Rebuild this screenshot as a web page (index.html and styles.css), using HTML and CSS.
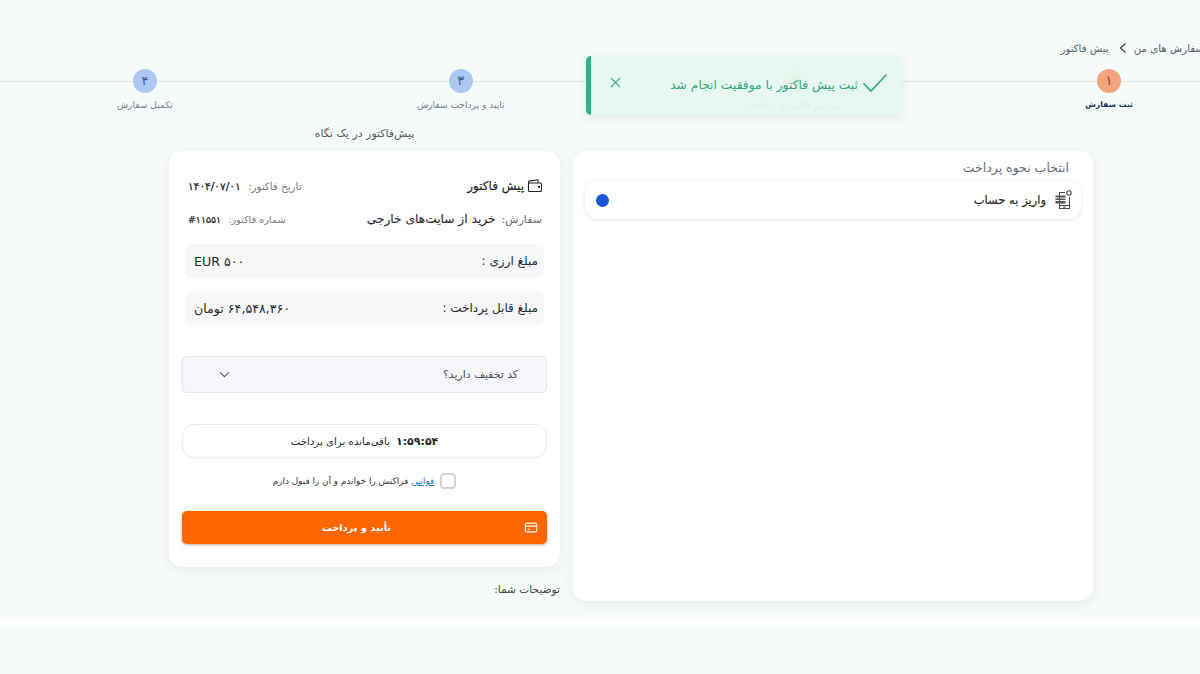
FILE: index.html
```html
<!DOCTYPE html>
<html lang="fa" dir="rtl">
<head>
    <meta charset="UTF-8">
    <meta name="viewport" content="width=device-width, initial-scale=1.0">
    <title>پیش فاکتور</title>
    <link rel="stylesheet" href="styles.css">
</head>
<body>
    <div class="page">
        <nav class="breadcrumb">
            <span>سفارش های من</span>
            <svg class="crumb-icon" viewBox="0 0 10 12"><path d="M7.500 1.500 2.500 6l5 4.500"/></svg>
            <span>پیش فاکتور</span>
        </nav>

        <!-- مراحل سفارش -->
        <ol class="steps">
            <li class="step step-done">
                <span class="step-num">۱</span>
                <span class="step-label">ثبت سفارش</span>
            </li>
            <li class="step step-current">
                <span class="step-num">۲</span>
                <span class="step-label">بررسی فاکتور و پرداخت</span>
            </li>
            <li class="step">
                <span class="step-num">۳</span>
                <span class="step-label">تایید و پرداخت سفارش</span>
            </li>
            <li class="step">
                <span class="step-num">۴</span>
                <span class="step-label">تکمیل سفارش</span>
            </li>
        </ol>

        <main class="content">
            <section class="card pay-card">
                <h2 class="pay-title">انتخاب نحوه پرداخت</h2>
                <label class="pay-option">
                    <svg class="pay-icon" viewBox="0 0 18 20">
                        <path d="M11 2.500H5.500v16h10V7"/>
                        <path d="M5.500 15.500h10M9 17h3"/>
                        <circle cx="15" cy="3" r="2.200"/>
                        <path class="pay-icon-fill" d="M1.500 5.500h10v2h-10zM1.500 8.500h10v1.500h-10zM1.500 11h10v2.500h-10z"/>
                    </svg>
                    <span class="pay-name">واریز به حساب</span>
                    <span class="radio-dot"></span>
                </label>
            </section>

            <div class="invoice-col">
                <p class="invoice-caption">پیش‌فاکتور در یک نگاه</p>
                <section class="card invoice">
                    <div class="invoice-row row-head">
                        <h1 class="invoice-title">
                            <svg class="wallet-icon" viewBox="0 0 16 14">
                                <path d="M1.500 4v7.500a1 1 0 0 0 1 1h11a1 1 0 0 0 1-1V5a1 1 0 0 0-1-1h-11a1 1 0 0 1-.4-1.900L11 .8V4"/>
                                <circle cx="12" cy="8" r=".6"/>
                            </svg>
                            پیش فاکتور
                        </h1>
                        <span class="meta">تاریخ فاکتور: <b>۱۴۰۴/۰۷/۰۱</b></span>
                    </div>
                    <div class="invoice-row row-order">
                        <span class="order"><span class="order-key">سفارش:</span> خرید از سایت‌های خارجی</span>
                        <span class="meta meta-num">شماره فاکتور: <b dir="ltr">#۱۱۵۵۱</b></span>
                    </div>

                    <div class="amount">
                        <span>مبلغ ارزی :</span>
                        <span class="amount-value">EUR ۵۰۰</span>
                    </div>
                    <div class="amount">
                        <span>مبلغ قابل پرداخت :</span>
                        <span class="amount-value">۶۴,۵۴۸,۳۶۰ تومان</span>
                    </div>

                    <div class="discount">
                        <span>کد تخفیف دارید؟</span>
                        <svg class="chevron" viewBox="0 0 12 8"><path d="M1 1.500 6 6.500l5-5"/></svg>
                    </div>

                    <div class="timer"><b>۱:۵۹:۵۴</b> باقی‌مانده برای پرداخت</div>

                    <label class="terms">
                        <span class="checkbox"></span>
                        <span><a href="#">قوانین</a> فراکنش را خواندم و آن را قبول دارم</span>
                    </label>

                    <button class="pay-btn" type="button">
                        <svg class="btn-icon" viewBox="0 0 16 14">
                            <rect x="1.500" y="2" width="13" height="10" rx="2"/>
                            <path d="M1.500 5.500h13M4 9h3"/>
                        </svg>
                        <span>تأیید و پرداخت</span>
                    </button>
                </section>
                <p class="notes">توضیحات شما:</p>
            </div>
        </main>

        <div class="strip"></div>
    </div>

    <!-- پیام موفقیت -->
    <div class="toast">
        <svg class="toast-check" viewBox="0 0 26 20"><path d="M1.500 10.500 9 18 24.500 1.500"/></svg>
        <span class="toast-text">ثبت پیش فاکتور با موفقیت انجام شد</span>
        <svg class="toast-close" viewBox="0 0 12 12"><path d="M1 1l10 10M11 1 1 11"/></svg>
    </div>
</body>
</html>
```

FILE: styles.css
```css
html, body {
    margin: 0;
    height: 100%;
    overflow: hidden;
}

body {
    background: #f5fbf8;
    font-family: "DejaVu Sans", sans-serif;
    color: #2b2f36;
}

.page {
    width: 1200px;
    height: 674px;
    padding-top: 40px;
    box-sizing: border-box;
    overflow: hidden;
}

/* مسیر صفحه */
.breadcrumb {
    display: flex;
    align-items: center;
    gap: 6px;
    height: 16px;
    margin-right: -4px;
    font-size: 10.200px;
    color: #555b63;
    white-space: nowrap;
}

.crumb-icon {
    width: 10px;
    height: 12px;
    margin-left: 3px;
    fill: none;
    stroke: #444;
    stroke-width: 1.300;
}

/* مراحل */
.steps {
    display: flex;
    justify-content: space-between;
    list-style: none;
    margin: 13px 0 0;
    padding: 0 67px 0 117px;
    background: linear-gradient(#dfe6e6, #dfe6e6) no-repeat 0 12px / 100% 1px;
}

.step {
    display: flex;
    flex-direction: column;
    align-items: center;
    gap: 5px;
}

.step-num {
    width: 24px;
    height: 24px;
    border-radius: 50%;
    background: #abc8f5;
    color: #3b5a8c;
    font-size: 13px;
    line-height: 24px;
    text-align: center;
}

.step-label {
    font-size: 9.100px;
    line-height: 14px;
    color: #727f93;
    white-space: nowrap;
}

.step-done .step-num {
    background: #f4a47c;
    color: #7c4526;
}

.step-done .step-label {
    font-size: 7.700px;
    color: #17305f;
    font-weight: bold;
}

.step-current .step-num {
    background: #f6dca8;
    color: #9a8350;
}

/* ستون ها */
.content {
    display: flex;
    gap: 13px;
    margin-top: 14px;
    padding: 0 107px 0 169px;
}

.card {
    background: #fff;
    border-radius: 14px;
    box-shadow: 0 3px 12px rgba(60, 80, 70, 0.08);
}

.pay-card {
    width: 520px;
    height: 450px;
    margin-top: 25px;
    padding: 8px 12px 0;
    box-sizing: border-box;
}

.pay-title {
    margin: 0 12px 4px 0;
    font-size: 12.500px;
    font-weight: normal;
    line-height: 18px;
    color: #666d78;
}

.pay-option {
    display: flex;
    align-items: center;
    height: 38px;
    padding: 0 9px 0 0;
    border-radius: 12px;
    background: #fff;
    box-shadow: 0 1px 4px rgba(40, 50, 60, 0.13);
}

.pay-icon {
    width: 18px;
    height: 20px;
    fill: none;
    stroke: #4a4a4a;
    stroke-width: 1.100;
}

.pay-icon .pay-icon-fill {
    fill: #555;
    stroke: none;
}

.pay-name {
    margin-right: 8px;
    font-size: 11.500px;
    -webkit-text-stroke: 0.15px #1d1f24;
    color: #1d1f24;
}

.radio-dot {
    width: 13px;
    height: 13px;
    margin-right: auto;
    margin-left: 11px;
    border-radius: 50%;
    background: #1a56db;
}

.invoice-col {
    width: 391px;
}

.invoice-caption {
    margin: 0;
    height: 25px;
    font-size: 10.900px;
    line-height: 16px;
    text-align: center;
    color: #555a62;
}

.invoice {
    height: 416px;
    padding: 25px 13px 0;
    box-sizing: border-box;
}

.invoice-row {
    display: flex;
    align-items: center;
    justify-content: space-between;
    height: 20px;
    padding: 0 5px 0 6px;
}

.row-order {
    margin-top: 13px;
}

.invoice-title {
    display: flex;
    align-items: center;
    gap: 3px;
    margin: 0 -1px 0 0;
    font-size: 12px;
    font-weight: normal;
    -webkit-text-stroke: 0.15px #1d1f24;
    color: #1d1f24;
}

.wallet-icon {
    width: 16px;
    height: 14px;
    fill: none;
    stroke: #222;
    stroke-width: 1.100;
}

.meta {
    font-size: 10.300px;
    color: #74797f;
}

.meta b {
    margin-right: 4px;
    font-size: 10.600px;
    font-weight: normal;
    -webkit-text-stroke: 0.25px #222;
    color: #222;
}

.meta-num {
    font-size: 9.700px;
}

.meta-num b {
    font-size: 9.400px;
}

.order {
    font-size: 12.200px;
    -webkit-text-stroke: 0.1px #26282d;
    color: #26282d;
}

.order-key {
    margin-left: 2px;
    font-size: 11px;
    -webkit-text-stroke: 0;
    color: #666b72;
}

.amount {
    display: flex;
    align-items: center;
    justify-content: space-between;
    height: 34px;
    margin: 13px 3px 0;
    padding: 0 6px 0 9px;
    border-radius: 6px;
    background: #f6f7f9;
    font-size: 12px;
    color: #26282d;
}

.amount-value {
    font-size: 12.600px;
}

.row-order + .amount {
    margin-top: 15px;
}

.discount {
    display: flex;
    align-items: center;
    justify-content: space-between;
    height: 37px;
    margin-top: 31px;
    padding: 0 28px 0 36px;
    box-sizing: border-box;
    border: 1px solid #e2e6ea;
    border-radius: 5px;
    background: #f5f7fa;
    font-size: 10.800px;
    color: #4a4f57;
}

.chevron {
    width: 11px;
    height: 7px;
    fill: none;
    stroke: #555;
    stroke-width: 1.200;
}

.timer {
    display: flex;
    align-items: center;
    justify-content: center;
    gap: 6px;
    height: 34px;
    margin-top: 31px;
    box-sizing: border-box;
    border: 1px solid #e7ebee;
    border-radius: 12px;
    font-size: 10.200px;
    color: #26282d;
}

.timer b {
    font-size: 11px;
}

.terms {
    display: flex;
    align-items: center;
    justify-content: center;
    gap: 6px;
    height: 18px;
    margin-top: 14px;
    font-size: 8.900px;
    color: #34373d;
}

.terms a {
    color: #2478b8;
}

.checkbox {
    width: 12px;
    height: 12px;
    border: 2px solid #d2d5d8;
    border-radius: 4px;
}

.pay-btn {
    display: flex;
    align-items: center;
    width: 100%;
    height: 33px;
    margin-top: 21px;
    padding: 0 9px 0 0;
    border: none;
    border-radius: 5px;
    background: #ff6600;
    box-shadow: 0 1px 3px rgba(120, 60, 20, 0.4);
    color: #fff;
    font-family: inherit;
    font-size: 9.800px;
    font-weight: bold;
}

.btn-icon {
    width: 14px;
    height: 13px;
    fill: none;
    stroke: #fff;
    stroke-width: 1.300;
}

.pay-btn span {
    margin-right: 133px;
}

.notes {
    margin: 14px 0 0;
    font-size: 10.600px;
    line-height: 16px;
    color: #3e434a;
}

.strip {
    height: 6px;
    margin-top: 18px;
    background: #fff;
}

/* پیام روی صفحه */
.toast {
    position: absolute;
    top: 56px;
    left: 586px;
    width: 316px;
    height: 59px;
    display: flex;
    align-items: center;
    box-sizing: border-box;
    padding: 0 14px 6px 0;
    border-left: 5px solid #2fb183;
    border-radius: 5px;
    background: rgba(229, 248, 240, 0.93);
    box-shadow: 0 3px 10px rgba(50, 90, 70, 0.1);
    color: #2fa87c;
}

.toast-check {
    width: 26px;
    height: 20px;
    fill: none;
    stroke: #2fa87c;
    stroke-width: 1.600;
}

.toast-text {
    margin: 4px 4px 0 0;
    font-size: 12.300px;
    white-space: nowrap;
}

.toast-close {
    width: 11px;
    height: 11px;
    margin-right: auto;
    margin-left: 19px;
    fill: none;
    stroke: #2fa87c;
    stroke-width: 1.200;
}
```
